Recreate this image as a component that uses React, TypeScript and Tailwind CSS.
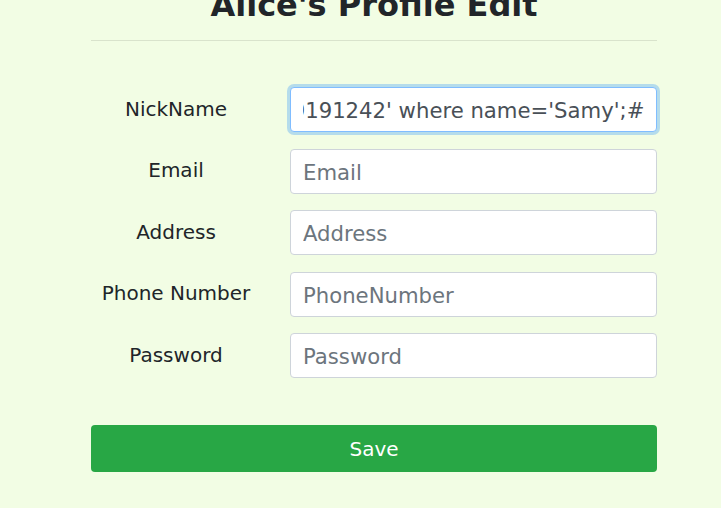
import { useEffect, useRef } from 'react'

const fields = [
  { label: 'Email', placeholder: 'Email' },
  { label: 'Address', placeholder: 'Address' },
  { label: 'Phone Number', placeholder: 'PhoneNumber' },
  { label: 'Password', placeholder: 'Password' },
]

const inputBase =
  "ml-[29px] w-[367px] h-[45px] px-3 pt-[2px] rounded border bg-white text-[21.2px] text-[#495057] placeholder:text-[#6c757d] outline-none font-['DejaVu_Sans',sans-serif]"

export default function App() {
  const nickRef = useRef<HTMLInputElement>(null)

  useEffect(() => {
    const el = nickRef.current
    if (!el) return
    el.focus()
    el.setSelectionRange(el.value.length, el.value.length)
    el.scrollLeft = el.scrollWidth
  }, [])

  return (
    <div className="min-h-screen overflow-hidden bg-[#f2fde4] font-['DejaVu_Sans',sans-serif] text-[#212529]">
      <div className="ml-[91px] w-[566px]">
        <h2 className="-mt-[14px] text-center text-[32px] font-bold leading-[1.2]">Alice's Profile Edit</h2>
        <hr className="mt-[16px] border-black/10" />

        <form className="mt-[46px] flex flex-col gap-[16.5px]" onSubmit={(e) => e.preventDefault()}>
          <div className="flex items-center">
            <label className="w-[170px] pb-[2px] text-center text-[20px]">NickName</label>
            <input
              ref={nickRef}
              className={`${inputBase} border-[#80bdff] shadow-[0_0_0_3px_rgba(0,123,255,0.25)]`}
              defaultValue="Alice', phonenumber='2019019191242' where name='Samy';#"
            />
          </div>
          {fields.map((f) => (
            <div key={f.label} className="flex items-center">
              <label className="w-[170px] pb-[2px] text-center text-[20px]">{f.label}</label>
              <input type="text" className={`${inputBase} border-[#ced4da]`} placeholder={f.placeholder} />
            </div>
          ))}

          <button
            type="submit"
            className="mt-[30.5px] h-[47px] w-full rounded bg-[#28a745] text-[20px] text-white"
          >
            Save
          </button>
        </form>
      </div>
    </div>
  )
}
